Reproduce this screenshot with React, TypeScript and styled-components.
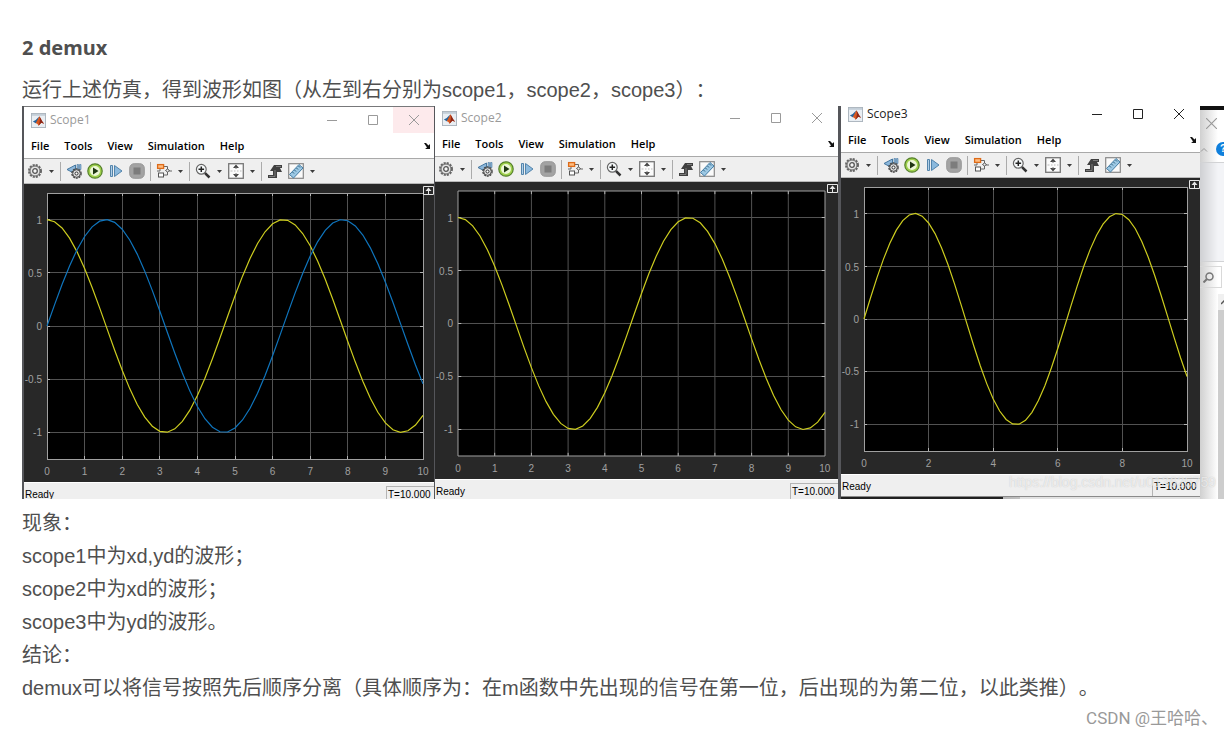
import React from "react";
import styled, { createGlobalStyle } from "styled-components";

const GlobalStyle = createGlobalStyle`
  * { box-sizing: border-box; }
  body {
    margin: 0;
    background: #fff;
    color: #4f4f4f;
    font-family: "Liberation Sans", "Noto Sans CJK SC", sans-serif;
    text-spacing-trim: space-all;
  }
  button {
    margin: 0;
    padding: 0;
    border: 0;
    background: none;
    color: inherit;
    font: inherit;
  }
  svg { display: block; flex: none; }
`;

const Article = styled.main`
  padding: 32px 3px 0 22px;
`;

const Heading = styled.h3`
  margin: 0 0 11px;
  font: 700 20px/32px "Noto Sans", "Noto Sans CJK SC", sans-serif;
`;

const Paragraph = styled.p`
  margin: 0;
  font-size: 20px;
  line-height: 33px;
`;

const Lead = styled(Paragraph)`
  line-height: 31px;
`;

const Conclusions = styled.section`
  padding-top: 8px;
`;

const Signature = styled.footer`
  padding: 1px 6px 0 0;
  color: #999;
  font: 17px/24px Roboto, "Noto Sans CJK SC", sans-serif;
  text-align: right;
`;

const Figure = styled.figure`
  position: relative;
  display: grid;
  grid-template-columns: 412fr 406fr 360fr 24fr;
  height: 393px;
  margin: 0;
  overflow: hidden;
  background: #efefef;
`;

const Window = styled.section<{ $lift: number; $edge: number; $framed: boolean }>`
  position: relative;
  display: flex;
  flex-direction: column;
  min-width: 0;
  margin-top: -${(p) => p.$lift}px;
  border-left: ${(p) => (p.$framed ? 2 : 1)}px solid #55565a;
  border-right: ${(p) => p.$edge}px solid #55565a;
  background: #efefef;
  color: #000;
`;

const TitleBar = styled.header<{ $active: boolean; $framed: boolean }>`
  display: flex;
  align-items: center;
  height: 27px;
  padding: 0 ${(p) => (p.$framed ? 0 : 1)}px 0 7px;
  border-top: 1px solid ${(p) => (p.$framed ? "#77787a" : "#fff")};
  background: #fff;
  color: ${(p) => (p.$active ? "#222" : "#9a9a9a")};
`;

const Title = styled.h4`
  flex: 1;
  margin: 0 0 0 4px;
  font: 400 12px/16px "Open Sans", sans-serif;
`;

const WindowButton = styled.button<{ $hot?: boolean }>`
  display: flex;
  align-items: center;
  justify-content: center;
  align-self: stretch;
  width: 41px;
  background: ${(p) => (p.$hot ? "#fdeaec" : "transparent")};
`;

const MenuBar = styled.nav`
  display: flex;
  align-items: center;
  gap: 15px;
  height: 25px;
  padding: 0 3px 0 7px;
  background: #fff;
  font: 600 11px/16px "Open Sans", sans-serif;
`;

const DockButton = styled.button`
  margin-left: auto;
`;

const ToolBar = styled.div`
  display: flex;
  align-items: center;
  height: 26px;
  border-top: 1px solid #a9a9a9;
  border-bottom: 1px solid #b8b8b8;
  background: #efefef;
`;

const ToolButton = styled.button<{ $menu?: boolean }>`
  display: flex;
  align-items: center;
  flex: none;
  gap: 6px;
  width: ${(p) => (p.$menu ? 33 : 21)}px;
  padding-left: 3px;
`;

const Separator = styled.span`
  flex: none;
  width: 1px;
  height: 19px;
  margin: 0 2px 0 3px;
  background: #ababab;
`;

const Canvas = styled.div<{ $height: number; $gutter: number }>`
  position: relative;
  display: grid;
  grid-template-columns: 23px minmax(0, 1fr) ${(p) => p.$gutter}px;
  grid-template-rows: 9px minmax(0, 1fr) 23px;
  height: ${(p) => p.$height}px;
  background: #282828;
  color: #a0a0a0;
  font: 10px/12px "Liberation Sans", sans-serif;
`;

const YAxis = styled.div`
  grid-area: 2 / 1;
  display: grid;
  grid-template-rows: repeat(5, 1fr);
  align-items: center;
  justify-items: end;
  padding: 2px 5px 0 0;
`;

const XAxis = styled.div`
  grid-area: 3 / 2;
  display: flex;
  justify-content: space-between;
  padding-top: 7px;
`;

const XLabel = styled.span`
  display: flex;
  justify-content: center;
  width: 0;
`;

const PlotArea = styled.svg`
  grid-area: 2 / 2;
  width: 100%;
  height: 100%;
  overflow: visible;
  background: #000;
`;

const ExpandButton = styled.button`
  position: absolute;
  top: 2px;
  right: 0;
`;

const StatusBar = styled.footer`
  display: flex;
  height: 23px;
  padding-left: 1px;
  border-top: 1px solid #fff;
  border-bottom: 1px solid #8a8a8a;
  font: 10px/12px "Liberation Sans", sans-serif;
`;

const StatusText = styled.span`
  flex: 1;
  padding-top: 6px;
`;

const TimeBox = styled.span`
  width: 48px;
  margin-top: 3px;
  padding: 2px 0 0 1px;
  border-top: 1px solid #b4b4b4;
  border-left: 1px solid #b4b4b4;
`;

const Desktop = styled.div`
  flex: 1;
  min-height: 2px;
  background: linear-gradient(90deg, #202020 45%, #b5b5b5 45%, #c2c2c2 50%, #e2e2e2 50%);
`;

const Behind = styled.aside`
  display: flex;
  flex-direction: column;
  min-width: 0;
  overflow: hidden;
  border-top: 4px solid #111;
  background: linear-gradient(90deg, #d0d0d0, #fff 18px);
`;

const BehindTop = styled.div`
  height: 52px;
  padding-top: 8px;
`;

const BehindClose = styled.button`
  display: block;
  padding-left: 6px;
`;

const BehindRow = styled.div`
  display: flex;
  align-items: center;
  gap: 8px;
  width: 40px;
  padding-top: 13px;
`;

const HelpBadge = styled.button`
  flex: none;
  width: 14px;
  height: 14px;
  border-radius: 7px;
  background: #0f7fdc;
  color: #fff;
  font: 700 10px/14px "Liberation Sans", sans-serif;
`;

const Ribbon = styled.div`
  height: 100px;
  border-top: 1px solid #d2d3d5;
  border-bottom: 1px solid #d2d3d5;
  background: linear-gradient(90deg, #cfd0d3, #f3f4f7 18px);
`;

const SearchButton = styled.button`
  display: flex;
  align-items: center;
  width: 22px;
  height: 22px;
  margin: 4px 0 6px;
  padding-left: 3px;
  border: 1px solid #d9d9d9;
  border-left: 0;
`;

const Scroller = styled.div`
  flex: 1;
  width: 6px;
  margin-left: auto;
  padding-top: 16px;
  background: #f0f0f0;
  overflow: hidden;
  position: relative;
`;

const Thumb = styled.div`
  height: 100%;
  background: #cdcdcd;
`;

const ScrollArrow = styled.svg`
  position: absolute;
  top: 6px;
  left: 3px;
`;

const Watermark = styled.span`
  position: absolute;
  right: 8px;
  bottom: 7px;
  color: rgba(255, 255, 255, 0.65);
  font: 14px/20px "Liberation Sans", sans-serif;
  text-shadow: 0 0 1px rgba(120, 120, 120, 0.4);
  pointer-events: none;
`;

const Icon = ({ children, size = 16 }: { children: React.ReactNode; size?: number }) => (
  <svg width={size} height={size} viewBox="0 0 16 16" fill="none" aria-hidden="true">
    {children}
  </svg>
);

const Caret = () => (
  <svg width="5" height="3" viewBox="0 0 5 3" aria-hidden="true">
    <path d="M0 0h5L2.500 3z" fill="#3c3c3c" />
  </svg>
);

const MatlabIcon = () => (
  <Icon size={15}>
    <rect x="0.500" y="0.500" width="15" height="15" fill="#e9eef3" stroke="#a9b3bc" />
    <path d="M1 1h14v2H1z" fill="#c3ced8" />
    <path d="M2 9l3-1.600L8.500 4 7.500 9 5 11z" fill="#26649c" />
    <path d="M5 11L9 3.500c1.500 2 2.500 6 5 8l-3-1-3 3c-.5-1.500-1.500-2.500-3-2.500z" fill="#d8571f" />
    <path d="M9 3.500c1 3 .5 7-1 10l3-3 3 1C11.500 9 10.500 5.500 9 3.500z" fill="#8c2517" />
  </Icon>
);

const GearIcon = () => (
  <Icon>
    <circle cx="8" cy="8" r="6" stroke="#666" strokeWidth="2" strokeDasharray="2.100 1.040" />
    <circle cx="8" cy="8" r="5" fill="#e4e4e4" stroke="#666" />
    <circle cx="8" cy="8" r="2.300" fill="#f6f6f6" stroke="#555" strokeWidth="1.300" />
  </Icon>
);

const StepBackIcon = () => (
  <Icon>
    <path d="M9.500 2v9L1 6.500z" fill="#8db8dc" stroke="#44769f" />
    <path d="M11 1.500h1.500v5H11zM13.500 1.500H15v5h-1.500z" fill="#8db8dc" stroke="#44769f" strokeWidth="0.600" />
    <circle cx="10.500" cy="10.500" r="4.500" stroke="#444" strokeWidth="1.500" strokeDasharray="2 0.830" />
    <circle cx="10.500" cy="10.500" r="3.800" fill="#ddd" stroke="#555" />
    <circle cx="10.500" cy="10.500" r="1.500" fill="#fff" stroke="#333" />
  </Icon>
);

const RunIcon = () => (
  <Icon>
    <circle cx="8" cy="8" r="7.200" fill="#9fd04c" stroke="#55802a" strokeWidth="1.200" />
    <circle cx="8" cy="8" r="5" fill="#edf7d8" />
    <path d="M6 4.500l5.500 3.500L6 11.500z" fill="#1e3512" />
  </Icon>
);

const StepIcon = () => (
  <Icon>
    <path d="M2.500 2.500h2v11h-2z" fill="#b2d0e8" stroke="#5384ab" />
    <path d="M6.500 2.500L14 8l-7.500 5.500z" fill="#8bb9dd" stroke="#5384ab" />
  </Icon>
);

const StopIcon = () => (
  <Icon>
    <rect x="0.700" y="0.700" width="14.600" height="14.600" rx="4.500" fill="#a3a3a3" stroke="#989898" />
    <rect x="4.500" y="4.500" width="7" height="7" fill="#7c7c7c" />
  </Icon>
);

const BlocksIcon = () => (
  <Icon>
    <path d="M8 3.500h3.500v3M11.500 9v3H8M13 8h3M1 8h3V6" stroke="#666" />
    <rect x="1.600" y="1.600" width="6" height="3.800" fill="#ffbd80" stroke="#dd6b19" strokeWidth="1.300" />
    <rect x="2.500" y="10" width="5" height="4" fill="#fff" stroke="#555" />
    <path d="M9.500 7.500l2-1.500 2 1.500-2 1.500z" fill="#eee" stroke="#555" />
  </Icon>
);

const ZoomIcon = () => (
  <Icon>
    <path d="M9.800 9.800l4.700 4.700" stroke="#333" strokeWidth="2.500" />
    <circle cx="6.300" cy="6.300" r="4.900" fill="#f7fafb" stroke="#666" strokeWidth="1.200" />
    <path d="M6.300 3.500v5.600M3.500 6.300h5.600" stroke="#222" strokeWidth="1.500" />
  </Icon>
);

const FitIcon = () => (
  <Icon>
    <rect x="0.700" y="0.700" width="14.600" height="14.600" fill="#fbfbfb" stroke="#777" strokeWidth="1.300" />
    <path d="M8 1.500L11 5H5zM8 14.500L11 11H5z" fill="#444" />
    <path d="M8 4v2M8 10v2" stroke="#777" />
    <path d="M2.500 8h2M6 8h1.500M9 8h1.500M12 8h1.500" stroke="#bbb" />
  </Icon>
);

const TriggerIcon = () => (
  <Icon>
    <path d="M1 12h5V8H3l4-6h8v3h-2l2 4h-5v6H1z" fill="#404040" />
    <path d="M2 13.500h6V7M9 3.500h5" stroke="#8c8c8c" strokeWidth="0.800" />
  </Icon>
);

const RulerIcon = () => (
  <Icon>
    <rect x="0.700" y="0.700" width="14.600" height="14.600" fill="#fafafa" stroke="#888" strokeWidth="1.200" />
    <path d="M1.500 11.500l9.500-10 4 3.500-9.500 10z" fill="#9cc8e4" stroke="#447ca3" />
    <path d="M4.500 9l1.500 1.500M6.500 7L8 8.500M8.500 5L10 6.500M10.500 3L12 4.500" stroke="#2d617f" />
  </Icon>
);

type Glyph = "minimize" | "maximize" | "close";

const glyphPaths: Record<Glyph, string> = {
  minimize: "M0 5.500h10",
  maximize: "M0.500 0.500h9v9h-9z",
  close: "M0 0l10 10M10 0L0 10",
};

const CaptionGlyph = ({ kind }: { kind: Glyph }) => (
  <svg width="10" height="10" viewBox="0 0 10 10" fill="none" stroke="currentColor" aria-hidden="true">
    <path d={glyphPaths[kind]} />
  </svg>
);

type Curve = { fn: (t: number) => number; color: string };

const COS: Curve = { fn: Math.cos, color: "#cdcd1f" };
const SIN: Curve = { fn: Math.sin, color: "#0f75bd" };
const SIN_SINGLE: Curve = { fn: Math.sin, color: "#cdcd1f" };

const toPoints = (fn: Curve["fn"]) =>
  Array.from({ length: 51 }, (_, i) => i / 5)
    .map((t) => `${t * 100},${(125 - fn(t) * 100).toFixed(2)}`)
    .join(" ");

const Plot = ({ curves, step }: { curves: Curve[]; step: number }) => {
  const xs: number[] = [];
  for (let x = step; x < 10; x += step) xs.push(x * 100);
  const ys = [25, 75, 125, 175, 225];
  const grid = xs.map((x) => `M${x} 0V250`).join("") + ys.map((y) => `M0 ${y}H1000`).join("");
  const ticks =
    xs.map((x) => `M${x} 0v3M${x} 250v-3`).join("") + ys.map((y) => `M0 ${y}h9M1000 ${y}h-9`).join("");
  return (
    <PlotArea viewBox="0 0 1000 250" preserveAspectRatio="none" fill="none" role="img" aria-label="Waveform">
      <path d={grid} stroke="#525252" vectorEffect="non-scaling-stroke" shapeRendering="crispEdges" />
      <path d={ticks} stroke="#b4b4b4" vectorEffect="non-scaling-stroke" shapeRendering="crispEdges" />
      <path d="M0 0H1000V250H0z" stroke="#a0a0a0" vectorEffect="non-scaling-stroke" shapeRendering="crispEdges" />
      {curves.map((c, i) => (
        <polyline key={i} points={toPoints(c.fn)} stroke={c.color} strokeWidth="1.200" vectorEffect="non-scaling-stroke" />
      ))}
    </PlotArea>
  );
};

type ScopeProps = {
  title: string;
  curves: Curve[];
  step?: number;
  lift: number;
  canvasHeight: number;
  gutter?: number;
  edge?: number;
  active?: boolean;
  framed?: boolean;
};

const Scope = ({
  title,
  curves,
  step = 1,
  lift,
  canvasHeight,
  gutter = 13,
  edge = 0,
  active = false,
  framed = false,
}: ScopeProps) => (
  <Window $lift={lift} $edge={edge} $framed={framed}>
    <TitleBar $active={active} $framed={framed}>
      <MatlabIcon />
      <Title>{title}</Title>
      <WindowButton aria-label="Minimize"><CaptionGlyph kind="minimize" /></WindowButton>
      <WindowButton aria-label="Maximize"><CaptionGlyph kind="maximize" /></WindowButton>
      <WindowButton aria-label="Close" $hot={framed}><CaptionGlyph kind="close" /></WindowButton>
    </TitleBar>
    <MenuBar>
      {["File", "Tools", "View", "Simulation", "Help"].map((m) => (
        <button key={m}>{m}</button>
      ))}
      <DockButton aria-label="Dock">
        <svg width="7" height="6" viewBox="0 0 7 6" aria-hidden="true">
          <path d="M0 0h2l2.500 2.500L6 1v5H1l2-1.500z" fill="#111" />
        </svg>
      </DockButton>
    </MenuBar>
    <ToolBar>
      <ToolButton $menu aria-label="Configuration"><GearIcon /><Caret /></ToolButton>
      <Separator />
      <ToolButton aria-label="Stepping options"><StepBackIcon /></ToolButton>
      <ToolButton aria-label="Run"><RunIcon /></ToolButton>
      <ToolButton aria-label="Step forward"><StepIcon /></ToolButton>
      <ToolButton aria-label="Stop"><StopIcon /></ToolButton>
      <Separator />
      <ToolButton $menu aria-label="Highlight block"><BlocksIcon /><Caret /></ToolButton>
      <Separator />
      <ToolButton $menu aria-label="Zoom"><ZoomIcon /><Caret /></ToolButton>
      <ToolButton $menu aria-label="Scale axes"><FitIcon /><Caret /></ToolButton>
      <Separator />
      <ToolButton aria-label="Triggers"><TriggerIcon /></ToolButton>
      <ToolButton $menu aria-label="Measurements"><RulerIcon /><Caret /></ToolButton>
    </ToolBar>
    <Canvas $height={canvasHeight} $gutter={gutter}>
      <YAxis>
        {["1", "0.5", "0", "-0.5", "-1"].map((v) => (
          <span key={v}>{v}</span>
        ))}
      </YAxis>
      <Plot curves={curves} step={step} />
      <XAxis>
        {Array.from({ length: 10 / step + 1 }, (_, i) => (
          <XLabel key={i}>{i * step}</XLabel>
        ))}
      </XAxis>
      <ExpandButton aria-label="Maximize axes">
        <svg width="11" height="9" viewBox="0 0 11 9" fill="none" stroke="#e6e6e6" aria-hidden="true">
          <path d="M0.500 0.500h10v8h-10z" fill="#282828" />
          <path d="M5.500 8V3" />
          <path d="M5.500 1.500L8.500 5h-6z" fill="#e6e6e6" stroke="none" />
        </svg>
      </ExpandButton>
    </Canvas>
    <StatusBar>
      <StatusText>Ready</StatusText>
      <TimeBox>T=10.000</TimeBox>
    </StatusBar>
    <Desktop />
  </Window>
);

export default function App() {
  return (
    <>
      <GlobalStyle />
      <Article>
        <Heading>2 demux</Heading>
        <Lead>运行上述仿真，得到波形如图（从左到右分别为scope1，scope2，scope3）：</Lead>
        <Figure>
          <Scope title="Scope1" curves={[COS, SIN]} lift={0} canvasHeight={298} gutter={11} framed />
          <Scope title="Scope2" curves={[COS]} lift={2} canvasHeight={297} edge={2} />
          <Scope title="Scope3" curves={[SIN_SINGLE]} step={2} lift={6} canvasHeight={296} active />
          <Behind>
            <BehindTop>
              <BehindClose aria-label="Close">
                <svg width="11" height="11" viewBox="0 0 10 10" stroke="#999" aria-hidden="true">
                  <path d="M0 0l10 10M10 0L0 10" />
                </svg>
              </BehindClose>
              <BehindRow>
                <svg width="8" height="5" viewBox="0 0 8 5" fill="none" stroke="#999" aria-hidden="true">
                  <path d="M1 4.500l3-3 3 3" />
                </svg>
                <HelpBadge>?</HelpBadge>
              </BehindRow>
            </BehindTop>
            <Ribbon />
            <SearchButton aria-label="Search">
              <svg width="11" height="11" viewBox="0 0 11 11" fill="none" stroke="#777" aria-hidden="true">
                <circle cx="6.500" cy="4.500" r="3.500" strokeWidth="1.500" />
                <path d="M4 7L0.500 10.500" strokeWidth="2" />
              </svg>
            </SearchButton>
            <Scroller>
              <Thumb />
              <ScrollArrow width="6" height="5" viewBox="0 0 6 5" fill="none" stroke="#555" aria-hidden="true">
                <path d="M0 4l3-3 3 3" strokeWidth="1.500" />
              </ScrollArrow>
            </Scroller>
          </Behind>
          <Watermark>https://blog.csdn.net/u013625759</Watermark>
        </Figure>
        <Conclusions>
          <Paragraph>现象：</Paragraph>
          <Paragraph>scope1中为xd,yd的波形；</Paragraph>
          <Paragraph>scope2中为xd的波形；</Paragraph>
          <Paragraph>scope3中为yd的波形。</Paragraph>
          <Paragraph>结论：</Paragraph>
          <Paragraph>
            demux可以将信号按照先后顺序分离（具体顺序为：在m函数中先出现的信号在第一位，后出现的为第二位，以此类推）。
          </Paragraph>
        </Conclusions>
        <Signature>CSDN @王哈哈、</Signature>
      </Article>
    </>
  );
}
